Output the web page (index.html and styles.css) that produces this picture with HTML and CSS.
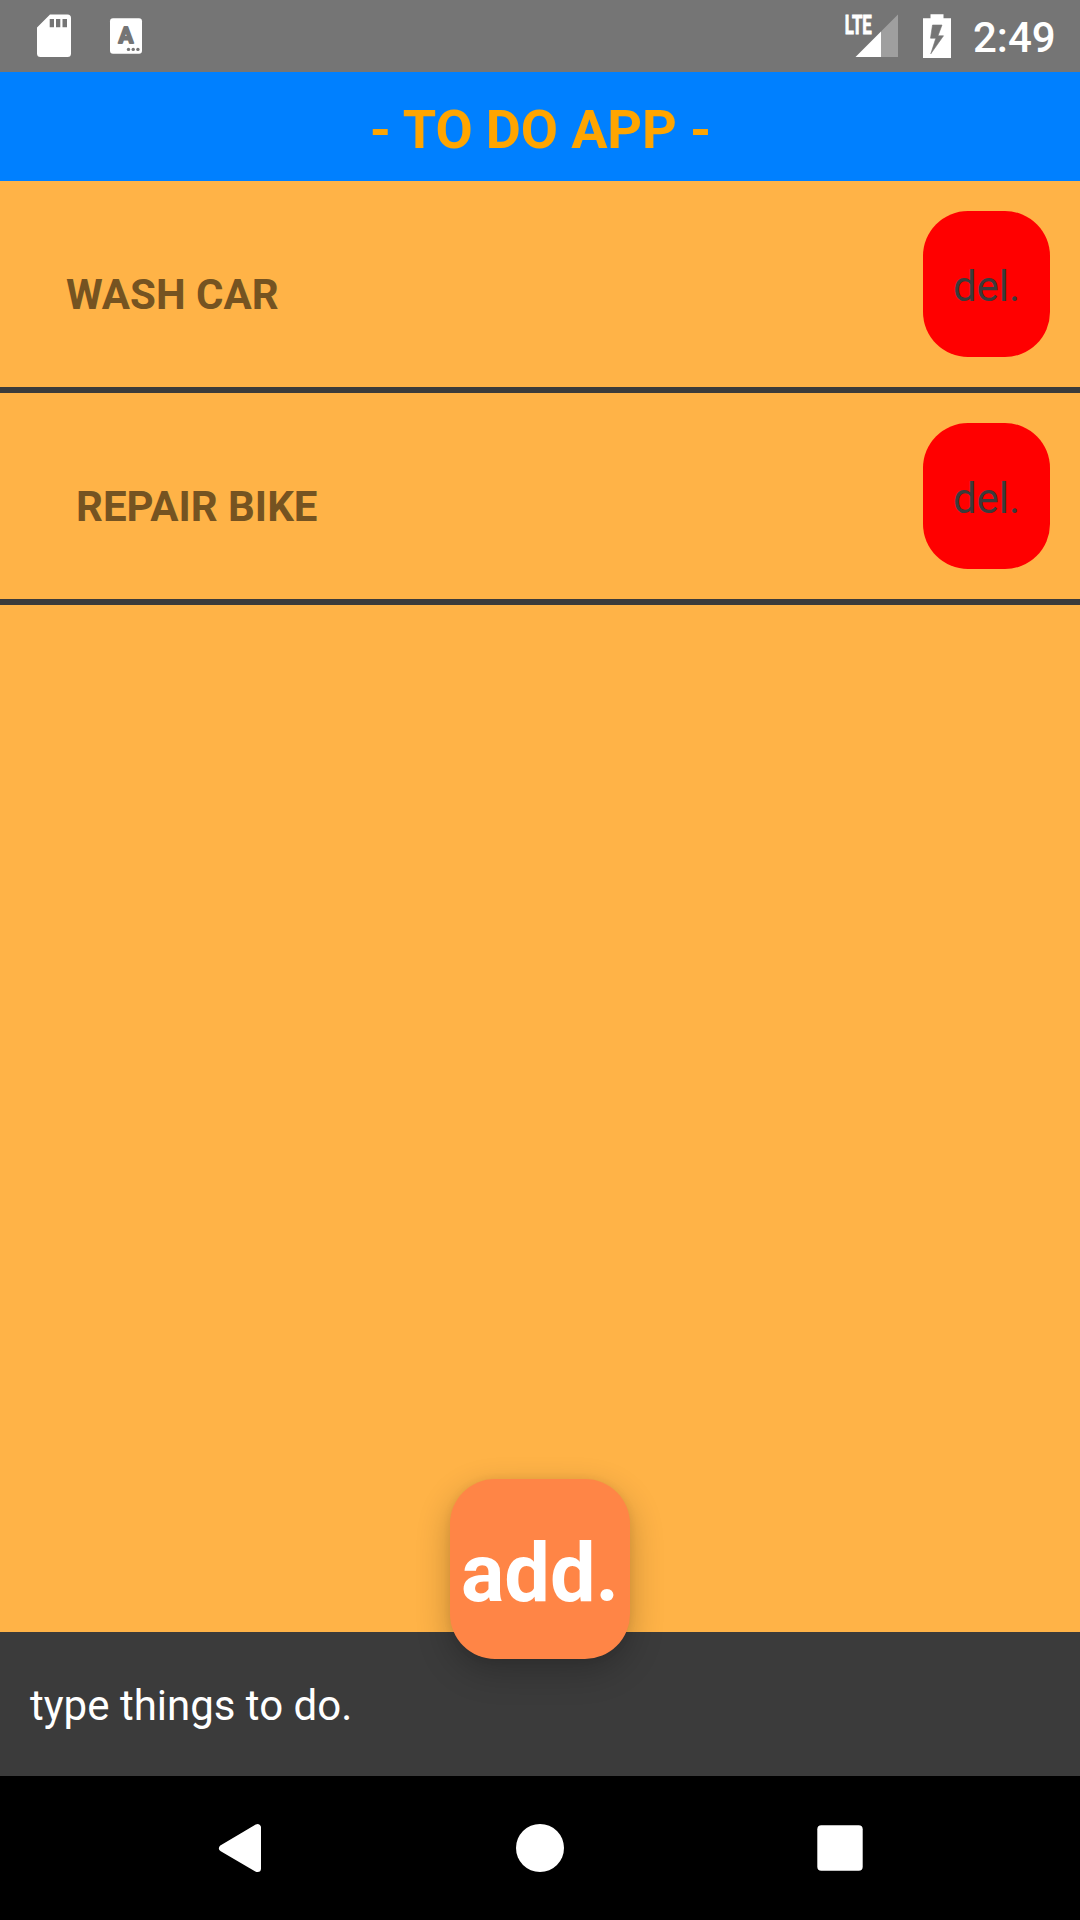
FILE: index.html
```
<!DOCTYPE html>
<html lang="en">
<head>
<meta charset="utf-8">
<title>To Do App</title>
<link rel="stylesheet" href="styles.css">
</head>
<body>
<div class="screen">
  <div class="status-bar">
    <svg class="status-icons-left" width="150" height="72" viewBox="0 0 150 72">
      <path fill="#fff" fill-rule="evenodd" d="M50 14.5H67.500Q71 14.500 71 18V53.500Q71 57 67.500 57H40.500Q37 57 37 53.500V27.500ZM49.700 19V27.300H54V19ZM56 19V27.300H60.300V19ZM62.500 19V27.300H67V19Z"/>
      <rect x="110" y="18.300" width="32" height="35.500" rx="3" fill="#fff"/>
      <text class="badge-letter" x="126" y="43.400" text-anchor="middle">A</text>
      <g fill="#757575"><circle cx="128.500" cy="49.400" r="1.700"/><circle cx="133.200" cy="49.400" r="1.700"/><circle cx="137.900" cy="49.400" r="1.700"/></g>
    </svg>
    <div class="status-right">
      <svg width="112" height="72" viewBox="840 0 112 72">
        <path fill="#9f9f9f" d="M898 14.500V57H881V31.500Z"/>
        <path fill="#fff" d="M881 31.500V57H855.500Z"/>
        <text class="network" x="844.800" y="33.500" textLength="27" lengthAdjust="spacingAndGlyphs">LTE</text>
        <path fill="#fff" d="M930.500 14.300H943.500V18.300H951V58H923V18.300H930.500Z"/>
        <path fill="#757575" stroke="#757575" stroke-width=".6" d="M932.500 25L930.500 38.200H935.800L930.800 53.800L943.500 35.800H938L942 25Z"/>
      </svg>
      <span class="clock">2:49</span>
    </div>
  </div>
  <header class="header"><h1 class="title">- TO DO APP -</h1></header>
  <main class="list">
    <div class="task">
      <span class="task-name">WASH CAR</span>
      <button class="delete">del.</button>
    </div>
    <div class="task">
      <span class="task-name task-name-indented">REPAIR BIKE</span>
      <button class="delete">del.</button>
    </div>
  </main>
  <footer class="footer">
    <span class="placeholder">type things to do.</span>
    <button class="add">add.</button>
  </footer>
  <nav class="nav-bar">
    <svg width="1080" height="144" viewBox="0 0 1080 144">
      <path fill="#fff" stroke="#fff" stroke-width="7" stroke-linejoin="round" d="M222.500 72.300L257.500 51.600V92.600Z"/>
      <circle cx="540" cy="72" r="24" fill="#fff"/>
      <rect x="817.300" y="49.300" width="45.400" height="45.400" rx="4" fill="#fff"/>
    </svg>
  </nav>
</div>
</body>
</html>
```
FILE: styles.css
```
* { box-sizing: border-box; }
body { margin: 0; font-family: Roboto, sans-serif; }
button { border: 0; margin: 0; font-family: inherit; }
svg { display: block; }
.screen {
  width: 1080px;
  height: 1920px;
  display: flex;
  flex-direction: column;
  background: #ffb347;
  overflow: hidden;
}
.status-bar {
  height: 72px;
  flex: none;
  display: flex;
  justify-content: space-between;
  background: #757575;
  color: #fff;
}
.status-right { display: flex; align-items: center; width: 240px; }
.status-right svg { flex: none; }
.clock { padding: 3px 0 0 21px; font-size: 42px; font-weight: 500; white-space: nowrap; }
.network { fill: #fff; stroke: #fff; stroke-width: 0.9px; font-size: 26px; font-weight: 700; }
.badge-letter { fill: #757575; stroke: #757575; stroke-width: 1.8px; stroke-linejoin: round; font-size: 22px; font-weight: 700; }
.header {
  height: 109px;
  flex: none;
  display: flex;
  align-items: center;
  justify-content: center;
  padding: 6px 0 0 1px;
  background: #0080ff;
}
.title { margin: 0; color: #ffa500; font-size: 54px; font-weight: 700; letter-spacing: -0.13px; }
.list { flex: 1; }
.task {
  height: 212px;
  display: flex;
  align-items: center;
  justify-content: space-between;
  padding: 0 30px 0 66px;
  border-bottom: 6px solid #3b3b3b;
}
.task-name { padding-top: 21px; color: #755321; font-size: 42px; font-weight: 700; }
.task-name-indented { padding-left: 10px; }
.delete {
  width: 127px;
  height: 146px;
  padding: 5px 0 0;
  border-radius: 45px;
  background: #f00;
  color: #3b3b3b;
  font-size: 42px;
}
.footer {
  position: relative;
  height: 144px;
  flex: none;
  display: flex;
  align-items: center;
  padding: 3px 30px 0;
  background: #3b3b3b;
  color: #fff;
}
.placeholder { font-size: 42px; }
.add {
  position: absolute;
  left: 450px;
  top: -153px;
  width: 180px;
  height: 180px;
  padding: 9px 0 0;
  border-radius: 45px;
  background: #ff8546;
  color: #fff;
  font-size: 81px;
  font-weight: 700;
  box-shadow: 0 12px 34px rgba(0, 0, 0, 0.24), 0 0 8px rgba(0, 0, 0, 0.06);
}
.nav-bar { height: 144px; flex: none; background: #000; }
```
